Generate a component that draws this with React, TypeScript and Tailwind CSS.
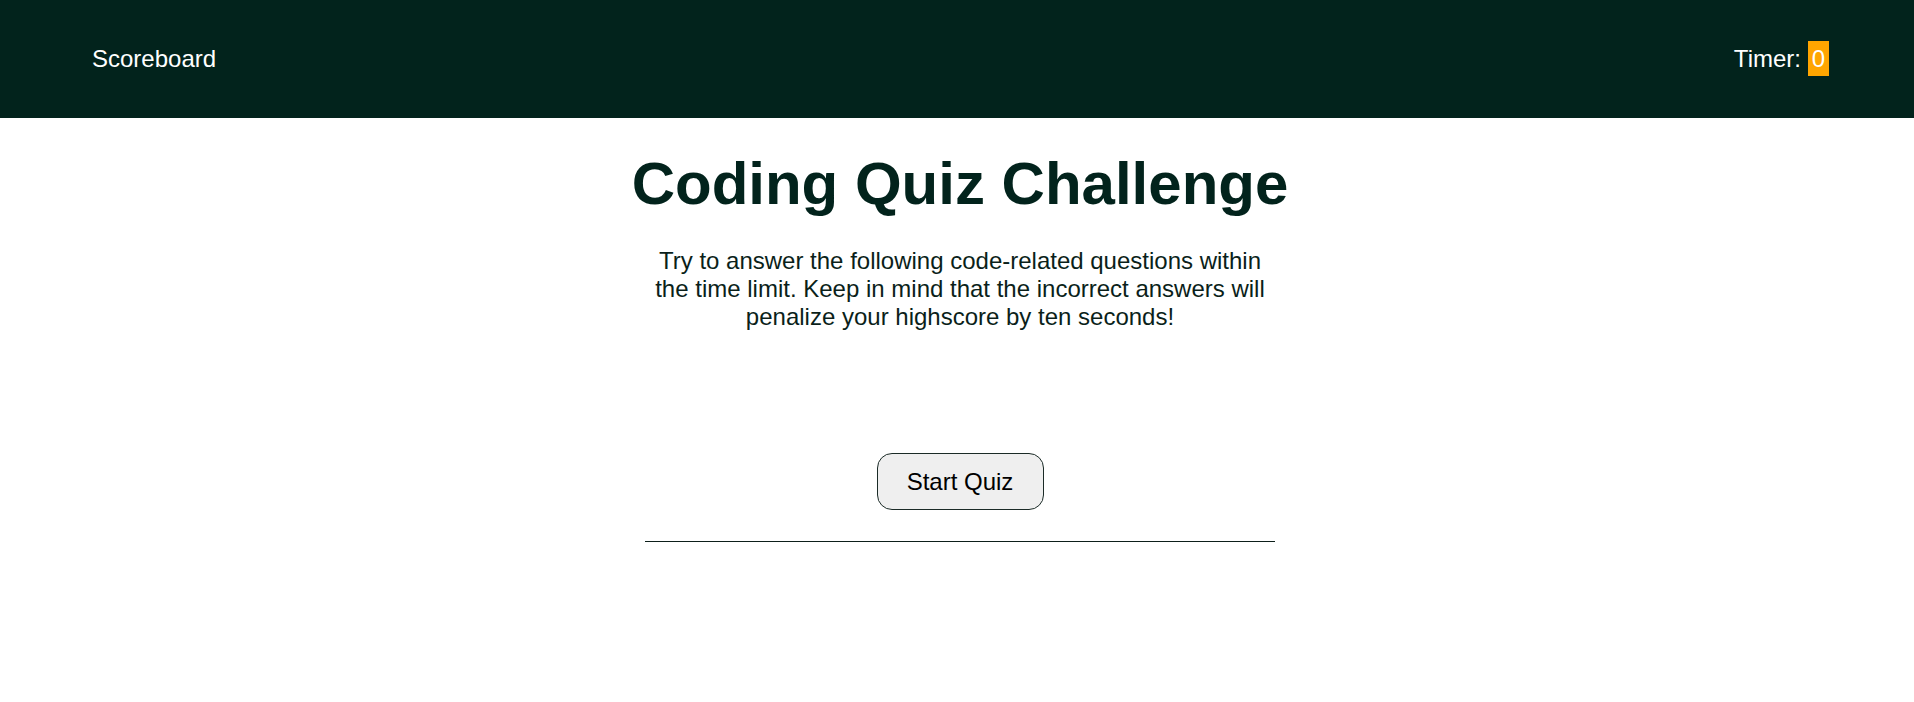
export default function App() {
  return (
    <div className="min-h-screen bg-white font-['Liberation_Sans',Arial,sans-serif]">
      {/* Header */}
      <header className="flex h-[118px] items-center justify-between bg-[#02231c] pl-[92px] pr-[85px] text-2xl text-white">
        <a href="#" className="leading-normal">
          Scoreboard
        </a>
        <div className="leading-normal">
          Timer: <span className="bg-[#ffa500] p-1">0</span>
        </div>
      </header>

      {/* Intro */}
      <main className="flex justify-center pl-[6px]">
        <div className="flex w-[630px] flex-col items-center">
          <h1 className="mt-[36px] text-6xl leading-none font-bold whitespace-nowrap text-[#02231c]">
            Coding Quiz Challenge
          </h1>
          <p className="mt-[33px] text-center text-2xl leading-7 text-[#0b1f1a]">
            Try to answer the following code-related questions within the time limit. Keep in mind that the incorrect answers will penalize your highscore by ten seconds!
          </p>
          <button className="mt-[122px] flex h-[57px] w-[167px] items-center justify-center rounded-[15px] border border-[#1b2b27] bg-[#efefef] text-2xl text-black">
            Start Quiz
          </button>
          <hr className="mt-[31px] w-full border-t border-[#0d1f1a]" />
        </div>
      </main>
    </div>
  );
}
